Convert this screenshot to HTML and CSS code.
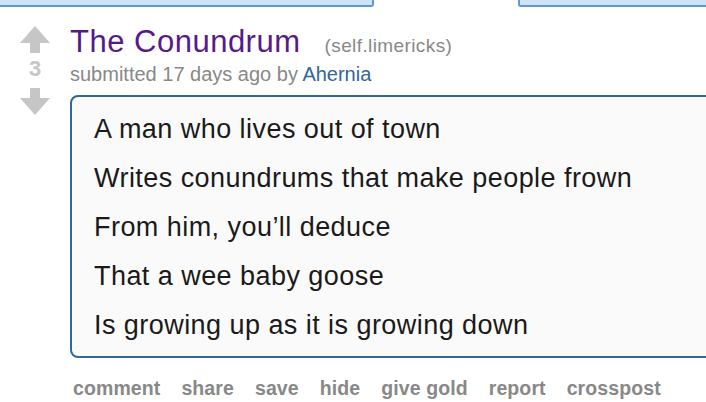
FILE: index.html
```html
<!DOCTYPE html>
<html>
<head>
<meta charset="utf-8">
<link rel="stylesheet" href="styles.css">
</head>
<body>
<div class="tabs">
  <div class="tab tab-left"></div>
  <div class="tab tab-active"></div>
  <div class="tab tab-right"></div>
</div>
<div class="thing">
  <div class="midcol">
    <svg class="arrow" width="30" height="27" viewBox="0 0 30 27"><path d="M15 0 L30 17 L20 17 L20 27 L10 27 L10 17 L0 17 Z" fill="#c6c6c6"/></svg>
    <div class="score">3</div>
    <svg class="arrow down" width="30" height="27" viewBox="0 0 30 27"><path d="M10 0 L20 0 L20 10 L30 10 L15 27 L0 10 L10 10 Z" fill="#c6c6c6"/></svg>
  </div>
  <div class="entry">
    <p class="title"><a class="title-link">The Conundrum</a><span class="domain">(self.limericks)</span></p>
    <p class="tagline">submitted 17 days ago by <a class="author">Ahernia</a></p>
    <div class="usertext">
      <p>A man who lives out of town</p>
      <p>Writes conundrums that make people frown</p>
      <p>From him, you’ll deduce</p>
      <p>That a wee baby goose</p>
      <p>Is growing up as it is growing down</p>
    </div>
    <ul class="buttons">
      <li>comment</li>
      <li>share</li>
      <li>save</li>
      <li>hide</li>
      <li>give gold</li>
      <li>report</li>
      <li>crosspost</li>
    </ul>
  </div>
</div>
</body>
</html>
```

FILE: styles.css
```css
html, body {
  margin: 0;
  padding: 0;
  background: #ffffff;
  overflow: hidden;
  width: 706px;
  height: 402px;
}
body {
  font-family: "Liberation Sans", Arial, sans-serif;
}
.tabs {
  display: flex;
  height: 7px;
}
.tab {
  box-sizing: border-box;
  height: 7px;
}
.tab-left {
  width: 374px;
  background: #cee3f8;
  border-bottom: 2px solid #5f99cf;
  border-right: 2px solid #5f99cf;
  border-bottom-right-radius: 3px;
}
.tab-active {
  width: 144px;
  background: #ffffff;
}
.tab-right {
  flex: 1;
  background: #cee3f8;
  border-bottom: 2px solid #5f99cf;
  border-left: 2px solid #5f99cf;
  border-bottom-left-radius: 3px;
}
.thing {
  display: flex;
  padding-top: 19px;
}
.midcol {
  width: 70px;
  flex: none;
  display: flex;
  flex-direction: column;
  align-items: center;
}
.arrow {
  display: block;
}
.score {
  color: #c6c6c6;
  font-weight: bold;
  font-size: 22px;
  line-height: 22px;
  height: 22px;
  margin: 5px 0 8px;
}
.entry {
  flex: none;
  width: 680px;
}
.title {
  margin: 0;
  height: 31px;
  line-height: 31px;
  white-space: nowrap;
}
.title-link {
  color: #551a8b;
  font-size: 31px;
  letter-spacing: 0.5px;
}
.domain {
  color: #888888;
  font-size: 19px;
  letter-spacing: 0.4px;
  margin-left: 24px;
}
.tagline {
  margin: 5px 0 0;
  color: #888888;
  font-size: 20px;
  line-height: 24px;
}
.author {
  color: #336699;
}
.usertext {
  margin-top: 9px;
  box-sizing: border-box;
  width: 660px;
  height: 263px;
  border: 2px solid #336699;
  border-radius: 8px;
  background: #fafafa;
  padding: 8px 0 0 22px;
}
.usertext p {
  margin: 0;
  color: #1a1a1a;
  font-size: 27px;
  line-height: 49px;
  letter-spacing: 0.45px;
  white-space: nowrap;
}
.buttons {
  list-style: none;
  margin: 19px 0 0 3px;
  padding: 0;
  display: flex;
  gap: 21px;
}
.buttons li {
  color: #888888;
  font-weight: bold;
  font-size: 19.5px;
  line-height: 22px;
  letter-spacing: 0.1px;
}
```
